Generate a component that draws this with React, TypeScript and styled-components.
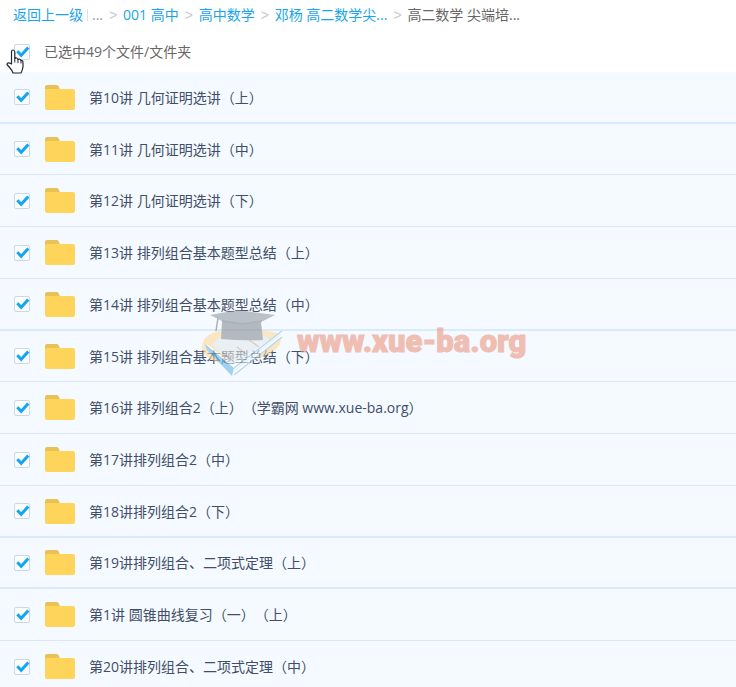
import React, { useState } from "react";
import styled, { createGlobalStyle } from "styled-components";

const GlobalStyle = createGlobalStyle`
  * { box-sizing: border-box; }
  body {
    margin: 0;
    background: #fff;
    color: #424e67;
    font-family: "Open Sans", "Noto Sans CJK SC", sans-serif;
    font-size: 14px;
    line-height: 20px;
    text-spacing-trim: space-all;
    overflow-x: hidden;
  }
`;

const Page = styled.main`
  position: relative;
  height: 100vh;
  overflow: hidden;
`;

const Breadcrumb = styled.nav`
  display: flex;
  align-items: center;
  height: 32px;
  padding: 0 13px 2px;
  white-space: nowrap;
`;

const Crumb = styled.a`
  color: #18a5ee;
  text-decoration: none;
`;

const Divider = styled.span`
  width: 1px;
  height: 12px;
  margin: 0 4px;
  background: #d8e2ee;
`;

const Muted = styled.span`
  color: #999;
`;

const Separator = styled.span`
  width: 8px;
  margin: 0 6px;
  color: #c4cbd5;
  font-family: "Liberation Sans", sans-serif;
`;

const Current = styled.span`
  color: #666;
`;

const SelectionBar = styled.label`
  display: flex;
  align-items: center;
  gap: 14px;
  height: 40px;
  padding: 0 14px;
  color: #666;
`;

const List = styled.ul`
  margin: 0;
  padding: 0;
  list-style: none;
`;

const Row = styled.li<{ $strong?: boolean }>`
  height: 52px;
  background: #f4faff;
  border-bottom: ${(p) => (p.$strong ? "2px solid #d9eafa" : "1px solid #dbe6f3")};

  &:nth-child(4n + 2) {
    height: 51px;
  }
`;

const RowLabel = styled.label`
  display: flex;
  align-items: center;
  height: 100%;
  padding: 0 14px;
`;

const FileName = styled.span`
  margin-left: 14px;
  padding-top: 1px;
  white-space: nowrap;
`;

const CheckWrap = styled.span`
  display: grid;
  width: 16px;
  height: 16px;
  flex: none;

  > * {
    grid-area: 1 / 1;
  }
`;

const CheckInput = styled.input`
  appearance: none;
  width: 16px;
  height: 16px;
  margin: 0;
  border: 1px solid #cbd8e8;
  border-radius: 2px;
  background: #fbfdff;

  &:not(:checked) + svg {
    visibility: hidden;
  }
`;

const FolderSvg = styled.svg`
  width: 30px;
  height: 25px;
  margin-left: 15px;
  flex: none;
`;

const Cursor = styled.svg`
  position: absolute;
  left: 5px;
  top: 49px;
  width: 20px;
  height: 26px;
  pointer-events: none;
`;

const Watermark = styled.div`
  position: absolute;
  left: 200px;
  top: 306px;
  display: flex;
  align-items: center;
  gap: 13px;
  height: 72px;
  opacity: 0.6;
  pointer-events: none;
`;

const WatermarkText = styled.span`
  color: #ec9680;
  font-family: Impact, Roboto, sans-serif;
  font-size: 31px;
  font-weight: 900;
  line-height: 40px;
  -webkit-text-stroke: 1px #ec9680;
`;

function Checkbox({ checked, onChange }: { checked: boolean; onChange: () => void }) {
  return (
    <CheckWrap>
      <CheckInput type="checkbox" checked={checked} onChange={onChange} />
      <svg width="16" height="16" viewBox="0 0 16 16" aria-hidden="true" pointerEvents="none">
        <path d="M3.3 7.2 7.2 11.2 14.3 3.4" fill="none" stroke="#12a5f2" strokeWidth="3" />
      </svg>
    </CheckWrap>
  );
}

function Folder() {
  return (
    <FolderSvg viewBox="0 0 30 25" aria-hidden="true">
      <path d="M0 7V2Q0 0 2 0H12Q13 0 14 2L15 5V9H0Z" fill="#e8c256" />
      <path d="M0 5Q0 4 1 4H28Q30 4 30 6V23Q30 25 28 25H2Q0 25 0 23Z" fill="#ffd45b" />
    </FolderSvg>
  );
}

function Graduate() {
  return (
    <svg width="84" height="72" viewBox="0 0 84 72" aria-hidden="true">
      <path d="M18 25C-2 30-2 47 12 54L32 62 64 50C80 44 84 34 78 27L62 24Z" fill="#ffd99a" />
      <path d="M12 38 22 30 64 30 72 34 34 62Z" fill="#e3e8ea" />
      <path d="M7 38 33 59 82 25 82 31 34 69 7 43Z" fill="#fff" />
      <path d="M5 38 34 62 32 70 7 44Z" fill="#6db9e2" />
      <path d="M34 62 82 25M34 69 82 31" fill="none" stroke="#8fc3e2" strokeWidth="1.5" />
      <path d="M34 65 81 28" stroke="#d3dfe6" />
      <path d="m22 46 8 7m7-12 9 7m3-14 10 7" stroke="#c8b49b" strokeWidth="1.5" />
      <path d="M22 15 21 33Q42 35 63 34L61 16Z" fill="#8a8e96" />
      <path d="M10 9 38 4 75 9 63 15 43 18 22 15Z" fill="#959aa2" />
      <path d="M22 15 43 18 62 15M18 12 16 25" fill="none" stroke="#7c828b" strokeWidth="1.5" />
    </svg>
  );
}

const files = [
  { name: "第10讲 几何证明选讲（上）", strong: true },
  { name: "第11讲 几何证明选讲（中）" },
  { name: "第12讲 几何证明选讲（下）" },
  { name: "第13讲 排列组合基本题型总结（上）" },
  { name: "第14讲 排列组合基本题型总结（中）", strong: true },
  { name: "第15讲 排列组合基本题型总结（下）" },
  { name: "第16讲 排列组合2（上）（学霸网 www.xue-ba.org）" },
  { name: "第17讲排列组合2（中）" },
  { name: "第18讲排列组合2（下）", strong: true },
  { name: "第19讲排列组合、二项式定理（上）", strong: true },
  { name: "第1讲 圆锥曲线复习（一）（上）" },
  { name: "第20讲排列组合、二项式定理（中）" },
];

const ancestors = ["001 高中", "高中数学", "邓杨 高二数学尖..."];

export default function App() {
  const [selected, setSelected] = useState(() => files.map(() => true));
  const allSelected = selected.every(Boolean);
  const toggle = (index: number) =>
    setSelected((current) => current.map((value, i) => (i === index ? !value : value)));

  return (
    <Page>
      <GlobalStyle />
      <Breadcrumb>
        <Crumb href="#">返回上一级</Crumb>
        <Divider />
        <Muted>...</Muted>
        {ancestors.map((name) => (
          <React.Fragment key={name}>
            <Separator>&gt;</Separator>
            <Crumb href="#">{name}</Crumb>
          </React.Fragment>
        ))}
        <Separator>&gt;</Separator>
        <Current>高二数学 尖端培...</Current>
      </Breadcrumb>
      <SelectionBar>
        <Checkbox
          checked={allSelected}
          onChange={() => setSelected(files.map(() => !allSelected))}
        />
        <span>已选中49个文件/文件夹</span>
      </SelectionBar>
      <List>
        {files.map((file, index) => (
          <Row key={file.name} $strong={file.strong}>
            <RowLabel>
              <Checkbox checked={selected[index]} onChange={() => toggle(index)} />
              <Folder />
              <FileName>{file.name}</FileName>
            </RowLabel>
          </Row>
        ))}
      </List>
      <Watermark aria-hidden="true">
        <Graduate />
        <WatermarkText>www.xue-ba.org</WatermarkText>
      </Watermark>
      <Cursor viewBox="0 0 20 26" aria-hidden="true">
        <path
          d="M6.5 15V3Q6.5 1 8 1T9.800 3V9.500Q12 8 13 10.500Q15 9.500 16 11.500Q18 11 18 14V18Q17.500 21 16 24H8Q7 21 5 19L2 15.500Q2 12.500 6.500 15Z"
          fill="#fff"
          stroke="#202733"
          strokeWidth="1.2"
          strokeLinejoin="round"
        />
        <path d="M9.800 9.500v4m3.200-3v3.500m3-2.500v3" stroke="#202733" />
      </Cursor>
    </Page>
  );
}
